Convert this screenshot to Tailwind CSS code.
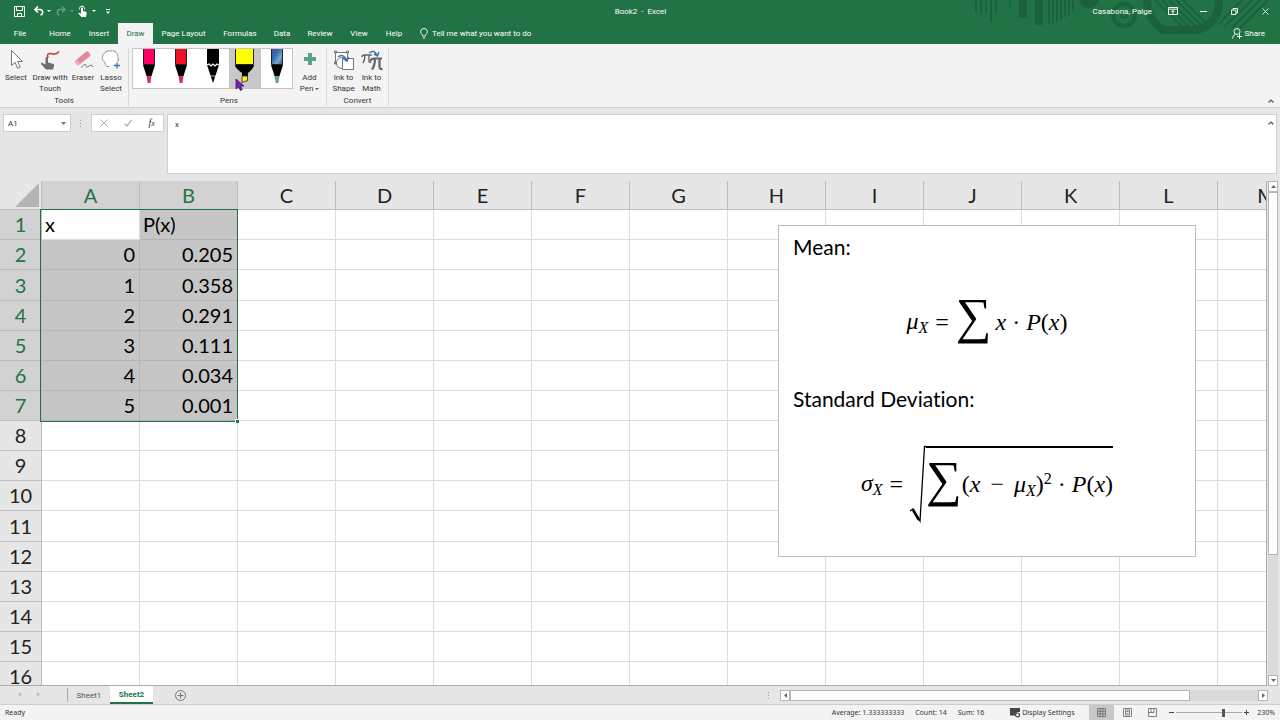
<!DOCTYPE html>
<html lang="en">
<head>
  <meta charset="UTF-8" />
  <meta name="viewport" content="width=device-width, initial-scale=1.0" />
  <title>Book2 - Excel</title>
  <script src="https://cdn.jsdelivr.net/npm/@tailwindcss/browser@4"></script>
</head>
<body class="flex h-screen flex-col overflow-hidden bg-[#e6e6e6] font-['Roboto','Noto_Sans',sans-serif] text-[8px] leading-[11px] text-[#333]">

  <!-- TITLE BAR + TABS -->
  <header class="relative bg-[#217346] text-white">
    <svg class="absolute top-0 right-0 h-11 w-[310px]" viewBox="0 0 310 44" fill="none" stroke="#1b613a">
      <path stroke-width="2" d="M6 0v13M11 0v15M16 0v13M21 0v22M26 0v12M40 0v7"/>
      <path stroke-width="8" d="M53 0v18M69 0v25"/>
      <path stroke-width="2" d="M79 0v24M83 0v23M87 0v22M91 0v20M95 0v17M99 0v15M103 0v11"/>
      <path fill="#1b613a" stroke="none" d="M109 0h20a10 8 0 0 1-20 0z"/>
      <circle cx="154" cy="15" r="11" stroke-width="4"/>
      <circle cx="154" cy="15" r="3" stroke-width="2"/>
      <path stroke-width="8" d="M177 0a36 36 0 0 0 16 30h35q22-8 21-30"/>
      <path stroke-width="2" d="M185 0l32 31M192 0l30 30M199 0l28 28M206 0l25 25M213 0l22 22M248 25l24-25M254 27l28-27M262 28l28-28M270 28l28-28"/>
    </svg>

    <div class="relative flex h-[22px] items-center">
      <div class="flex flex-1 items-center pl-3">
        <button class="flex w-5 pl-[2px]" aria-label="Save">
          <svg class="size-[11px]" viewBox="0 0 11 11" fill="none" stroke="#fff"><path d="M.5.5h10v10h-10zM2.500.5v4h6v-4M3.500 10.500v-3h4v3"/></svg>
        </button>
        <button class="flex w-6 items-center gap-[3px] pl-[2px]" aria-label="Undo">
          <svg class="h-[10px] w-[10px]" viewBox="0 0 10 10" fill="none" stroke="#fff" stroke-width="1.600"><path d="M4 .5L1 3.500l3 3M1 3.500h4.500a2.800 2.800 0 0 1 1 5.500"/></svg>
          <svg class="h-[2px] w-1" viewBox="0 0 4 2" fill="#fff"><path d="M0 0h4L2 2z"/></svg>
        </button>
        <button class="flex w-[22px] items-center gap-1 opacity-30" aria-label="Redo">
          <svg class="h-[10px] w-[10px]" viewBox="0 0 10 10" fill="none" stroke="#fff" stroke-width="1.400"><path d="M6 .5l3 3-3 3M9 3.500H4.500a2.800 2.800 0 0 0-1 5.500"/></svg>
          <svg class="h-[2px] w-1" viewBox="0 0 4 2" fill="#fff"><path d="M0 0h4L2 2z"/></svg>
        </button>
        <button class="flex items-center gap-[5px]" aria-label="Touch mode">
          <svg class="h-[12px] w-[9px]" viewBox="0 0 9 12" fill="#fff"><path d="M3 3.500a1 1 0 0 1 2 0V6l3 .8q.8.200.7 1.200L8 12H3.500L.3 8.500q0-1.200 1.500-.6L3 8.600z"/><path fill="none" stroke="#fff" d="M1.500 4.500a2.600 2.600 0 1 1 5 0"/></svg>
          <svg class="h-[2px] w-1" viewBox="0 0 4 2" fill="#fff"><path d="M0 0h4L2 2z"/></svg>
        </button>
        <button class="ml-[10px] flex" aria-label="Customize toolbar">
          <svg class="h-[5px] w-1" viewBox="0 0 4 5" fill="#fff"><path d="M0 0h4v1H0zM0 2.500h4L2 5z"/></svg>
        </button>
      </div>
      <h1 class="whitespace-pre">Book2  -  Excel</h1>
      <div class="flex flex-1 items-center justify-end pr-[11px]">
        <span>Casabona, Paige</span>
        <button class="ml-4 flex" aria-label="Ribbon display options">
          <svg class="h-[8px] w-[10px]" viewBox="0 0 10 8" fill="none" stroke="#fff"><path d="M.5.5h9v7h-9zM.5 2.200h9M5 7V3.500M3.500 5L5 3.500 6.500 5"/></svg>
        </button>
        <button class="ml-[22px] flex" aria-label="Minimize">
          <svg class="h-2 w-[7px]" viewBox="0 0 7 8" stroke="#fff"><path d="M0 4.500h7"/></svg>
        </button>
        <button class="ml-6 flex" aria-label="Restore">
          <svg class="size-[7px]" viewBox="0 0 7 7" fill="none" stroke="#fff" stroke-width=".9"><path d="M.5 2h4.500v4.500H.5zM2 2V.5h4.500V5H5"/></svg>
        </button>
        <button class="ml-6 flex" aria-label="Close">
          <svg class="size-[7px]" viewBox="0 0 8 8" stroke="#fff" stroke-width=".9"><path d="M.5.5l7 7M7.500.5l-7 7"/></svg>
        </button>
      </div>
    </div>

    <nav class="relative flex h-[22px] items-center">
      <a href="#" class="w-10 text-center">File</a>
      <a href="#" class="w-10 text-center">Home</a>
      <a href="#" class="w-[38px] text-center">Insert</a>
      <a href="#" class="mt-px flex h-[21px] w-[35px] items-center justify-center bg-[#f3f3f3] text-[#217346]">Draw</a>
      <a href="#" class="w-[61px] text-center">Page Layout</a>
      <a href="#" class="w-[52px] text-center">Formulas</a>
      <a href="#" class="w-8 text-center">Data</a>
      <a href="#" class="w-11 text-center">Review</a>
      <a href="#" class="w-[34px] text-center">View</a>
      <a href="#" class="w-9 text-center">Help</a>
      <button class="ml-2 flex items-center gap-1">
        <svg class="h-[11px] w-2" viewBox="0 0 8 11" fill="none" stroke="#fff" stroke-width=".9"><path d="M2.500 8V6.800Q.6 5.500.6 3.800a3.400 3.400 0 0 1 6.800 0Q7.400 5.500 5.500 6.800V8zM2.700 10h2.600"/></svg>
        Tell me what you want to do
      </button>
      <button class="mr-[15px] ml-auto flex items-center gap-[3px]">
        <svg class="h-[11px] w-[10px]" viewBox="0 0 10 11" fill="none" stroke="#fff" stroke-width=".9"><circle cx="5" cy="3.500" r="3"/><path d="M.5 10.500Q.8 7 3.500 6.300M7.500 6v5M5 8.500h5"/></svg>
        Share
      </button>
    </nav>
  </header>

  <!-- RIBBON -->
  <section class="flex h-16 items-stretch border-b border-[#d0d0d0] bg-[#f3f3f3] pt-1">
    <div class="mb-px flex w-[129px] flex-col border-r border-[#d8d8d8]">
      <div class="flex flex-1 pt-px text-center">
        <button class="flex w-8 flex-col items-center">
          <svg class="h-[23px] w-5" viewBox="0 0 20 23" fill="#fff" stroke="#666" stroke-width=".9"><path d="M5.500 1.500v15l3.600-3.200 2.500 6 2.600-1.200-2.600-5.600h5z"/></svg>
          <span>Select</span>
        </button>
        <button class="flex w-9 flex-col items-center">
          <svg class="h-[23px] w-6" viewBox="0 0 24 23"><path fill="none" stroke="#c8403c" stroke-width="1.600" d="M10 9Q8 4 13 4.500q5 2 8-2"/><path fill="#6d6d6d" d="M7.500 9.500q0-1.500 1.300-1.500T10 9.500v4l5 1.300q1.500.5 1 2.200l-1 3.500H8l-5-5.500q.5-2 2.500-.5l2 1z"/></svg>
          <span>Draw with<br>Touch</span>
        </button>
        <button class="flex w-[30px] flex-col items-center">
          <svg class="h-[23px] w-6" viewBox="0 0 24 23"><path fill="#e8859a" d="M5.500 10.500L15.500 2.500q1-.6 2 .4l1.800 2.600q.5 1-.4 1.700L9 15z"/><path fill="#f3a8b6" d="M5.500 10.500L9 15l-1.500 1.200q-1 .5-1.800-.4L4 13.500q-.7-1 .2-1.800z"/><path fill="none" stroke="#777" d="M10 18.500q5-5 5-2t3 .5 4 1"/></svg>
          <span>Eraser</span>
        </button>
        <button class="flex w-[26px] flex-col items-center">
          <svg class="h-[23px] w-6" viewBox="0 0 24 23"><path fill="#fff" stroke="#666" stroke-dasharray="2 .6" stroke-width=".9" d="M10 17.500q-4 .5-4-4Q2 10 4 6.500 6 1.500 11 2q6-1 7.500 4t0 7"/><path stroke="#3f78bd" stroke-width="1.400" d="M18 13.500v6M15 16.500h6"/></svg>
          <span>Lasso<br>Select</span>
        </button>
      </div>
      <p class="text-center">Tools</p>
    </div>

    <div class="mb-px flex w-[198px] flex-col border-r border-[#d8d8d8] pl-[3px]">
      <div class="flex flex-1 items-start">
        <div class="flex h-[41px] border border-[#c6c6c6] bg-white">
          <button class="w-8" aria-label="Pink pen">
            <svg class="h-[39px] w-8" viewBox="0 0 32 39"><path stroke="#222" fill="#ff0066" d="M10.500-1h11v16.500h-11z"/><path d="M10 16h12l-3.500 11h-5z"/><path fill="#c53a68" d="M13.500 27h5L17.500 34h-2.800z"/></svg>
          </button>
          <button class="w-8" aria-label="Red pen">
            <svg class="h-[39px] w-8" viewBox="0 0 32 39"><path stroke="#222" fill="#f01028" d="M10.500-1h11v16.500h-11z"/><path d="M10 16h12l-3.500 11h-5z"/><path fill="#c53a58" d="M13.500 27h5L17.500 34h-2.800z"/></svg>
          </button>
          <button class="w-8" aria-label="Black pencil">
            <svg class="h-[39px] w-8" viewBox="0 0 32 39"><path d="M10 0h12v16l-6 18-6-18z"/><path fill="none" stroke="#fff" stroke-width="1.200" d="M10 16l2-1 2 2 2-2 2 2 2-2 2 1"/><path stroke="#fff" stroke-width=".7" d="M13 27h6"/></svg>
          </button>
          <button class="w-8 bg-[#c8c8c8]" aria-label="Yellow highlighter">
            <svg class="h-[39px] w-8" viewBox="0 0 32 39"><path stroke="#222" fill="#ff0" d="M6.500-1h18v16.500h-18z"/><path d="M6 16h19q0 3-6 8v3h-6v-3Q6 19 6 16z"/><path stroke="#222" stroke-width=".8" fill="#ffee20" d="M13 27h5.500v4.500L13 33.500z"/></svg>
          </button>
          <button class="w-[31px]" aria-label="Galaxy pen">
            <svg class="h-[39px] w-8" viewBox="0 0 32 39"><defs><linearGradient id="galaxy" x2="1" y2="1"><stop stop-color="#5b4b8c"/><stop offset=".4" stop-color="#356fae"/><stop offset=".7" stop-color="#77a9c9"/><stop offset="1" stop-color="#294b86"/></linearGradient></defs><path stroke="#222" fill="url(#galaxy)" d="M10.500-1h11v16.500h-11z"/><path d="M10 16h12l-3.500 11h-5z"/><path fill="#6b9c9c" d="M13.500 27h5L17.500 34h-2.800z"/></svg>
          </button>
        </div>
        <button class="flex flex-1 flex-col items-center pt-px">
          <svg class="h-[23px] w-3" viewBox="0 0 12 23" fill="#5aa284"><path d="M4 4h4v4h4v4H8v4H4v-4H0V8h4z"/></svg>
          <span>Add<br>Pen <svg class="inline h-[2px] w-1" viewBox="0 0 4 2" fill="#555"><path d="M0 0h4L2 2z"/></svg></span>
        </button>
      </div>
      <p class="text-center">Pens</p>
    </div>

    <div class="mb-px flex w-[62px] flex-col border-r border-[#d8d8d8]">
      <div class="flex flex-1 justify-center pt-px">
        <button class="flex w-7 flex-col items-center">
          <svg class="h-[23px] w-6" viewBox="0 0 24 23" fill="#fff" stroke="#777"><path d="M3.500 3.500h12v11h-12z"/><circle cx="10" cy="14" r="5.500"/><path d="M10.500 9.500h11v11h-11z"/><path fill="none" stroke="#777" d="M2.500 2h2v2h-2zM14.500 2h2v2h-2zM2.500 13h2v2h-2z"/><path fill="none" stroke="#3f78bd" stroke-width="1.600" d="M6 8q5-4 8.500 3M11 9.500l4 2.500 1.500-4"/></svg>
          <span>Ink to<br>Shape</span>
        </button>
        <button class="flex w-7 flex-col items-center">
          <svg class="h-[23px] w-6" viewBox="0 0 24 23" fill="none" stroke="#666"><path stroke-width="1.400" d="M1.500 8q1-2 3-2H12M5 6q0 5-2 8M9 6v6q0 1.500 2 1.500"/><path stroke-width="2.200" d="M10.500 12q1-2.500 3.500-2.500h8M15 9.500q0 7-3 11M19.500 9.500v8q0 3 3 2.500"/><path stroke="#3f78bd" stroke-width="1.500" d="M9 4q5-4 8 2M14 5l3.500 2L19 3"/></svg>
          <span>Ink to<br>Math</span>
        </button>
      </div>
      <p class="text-center">Convert</p>
    </div>
    <button class="mr-[6px] mb-1 ml-auto self-end" aria-label="Collapse ribbon">
      <svg class="h-1 w-[6px]" viewBox="0 0 6 4" fill="none" stroke="#555" stroke-width="1.200"><path d="M.5 3.500L3 1l2.500 2.500"/></svg>
    </button>
  </section>

  <!-- FORMULA BAR -->
  <section class="flex h-[73px] items-start pt-[6px] pr-[3px] pl-[3px]">
    <div class="flex h-[18px] w-[68px] items-center border border-[#cfcfcf] bg-white pr-1">
      <input type="text" value="A1" aria-label="Name box" class="w-full min-w-0 flex-1 pl-1 outline-none">
      <svg class="h-[3px] w-[5px]" viewBox="0 0 5 3" fill="#777"><path d="M0 0h5L2.500 3z"/></svg>
    </div>
    <svg class="mt-[6px] ml-[9px] h-[7px] w-[2px]" viewBox="0 0 2 7" fill="#999"><path d="M0 0h1v1H0zM0 3h1v1H0zM0 6h1v1H0z"/></svg>
    <div class="ml-[9px] flex h-[18px] w-[73px] items-center justify-around border border-[#cfcfcf] bg-white">
      <button aria-label="Cancel"><svg class="size-2" viewBox="0 0 8 8" stroke="#b0b0b0"><path d="M.5.5l7 7M7.500.5l-7 7"/></svg></button>
      <button aria-label="Enter"><svg class="size-2" viewBox="0 0 8 8" fill="none" stroke="#b0b0b0" stroke-width="1.300"><path d="M.5 4.500L3 7l4.500-6"/></svg></button>
      <button class="font-['Liberation_Serif',serif] text-[10px] text-[#333] italic" aria-label="Insert function">f<span class="text-[8px]">x</span></button>
    </div>
    <div class="ml-[3px] flex h-[60px] flex-1 border border-[#cfcfcf] bg-white">
      <textarea aria-label="Formula bar" class="flex-1 resize-none px-[7px] pt-1 outline-none">x</textarea>
      <svg class="mt-[6px] mr-[2px] h-1 w-[6px]" viewBox="0 0 6 4" fill="none" stroke="#555" stroke-width="1.200"><path d="M.5 3.500L3 1l2.500 2.500"/></svg>
    </div>
  </section>

  <!-- SHEET -->
  <main class="flex min-h-0 flex-1">
    <div class="relative min-w-0 flex-1 overflow-hidden border-r border-b border-[#ababab] bg-white font-['Lato',sans-serif] text-xl text-black [font-variant-ligatures:none]">
      <table class="w-[1316px] table-fixed border-separate border-spacing-0 leading-[26px]">
        <thead>
          <tr id="columnRow" class="h-[29px]">
            <th class="w-[42px] border-r border-b border-[#bdbdbd] bg-[#e6e6e6] p-0">
              <svg class="ml-[15px] h-6 w-6" viewBox="0 0 24 24" fill="#b4b4b4"><path d="M24 0v24H0z"/></svg>
            </th>
          </tr>
        </thead>
        <tbody id="gridBody"></tbody>
      </table>

      <!-- selection frame -->
      <div class="pointer-events-none absolute top-[28px] left-[40px] h-[213px] w-[198px] border border-[#217346]">
        <span class="absolute -right-[2px] -bottom-[2px] size-1 border-t border-l border-white bg-[#217346]"></span>
      </div>

      <!-- formula text box -->
      <div class="absolute top-[44px] left-[778px] h-[332px] w-[418px] border border-[#bdbdbd] bg-white px-[14px] pt-[7px] text-[21px]">
        <p class="leading-7">Mean:</p>
        <div class="mt-[37px] flex h-12 items-center justify-center font-['Liberation_Serif',serif] text-2xl leading-6">
          <span class="italic">μ<sub class="text-base">X</sub></span>
          <span class="mx-[7px]">=</span>
          <span class="pb-3 text-[50px] leading-[48px]">∑</span>
          <span class="ml-1"><i>x</i> · <i>P</i>(<i>x</i>)</span>
        </div>
        <p class="mt-[39px] leading-7">Standard Deviation:</p>
        <div class="mt-[31px] flex h-20 items-center justify-center font-['Liberation_Serif',serif] text-2xl leading-6">
          <span class="italic">σ<sub class="text-base">X</sub></span>
          <span class="mx-[7px]">=</span>
          <svg class="h-[78px] w-4" viewBox="0 0 16 78" fill="none" stroke="#000"><path stroke-width="1.300" d="M0 66l3-2 7 12L14.500 1.500H16"/><path stroke-width="2.600" d="M3 65l6 10"/></svg>
          <div class="flex h-[76px] items-center border-t-2 border-black">
            <span class="pb-3 text-[50px] leading-[48px]">∑</span>
            <span>(<i>x</i> <span class="mx-1">−</span> <i>μ<sub class="text-base">X</sub></i>)<sup class="text-base">2</sup> · <i>P</i>(<i>x</i>)</span>
          </div>
        </div>
      </div>
    </div>

    <!-- vertical scrollbar -->
    <div class="mr-[2px] ml-px flex w-[10px] flex-col bg-[#dadada]">
      <button class="flex h-[11px] items-center justify-center border border-[#b5b5b5] bg-white" aria-label="Scroll up"><svg class="h-[3px] w-[5px]" viewBox="0 0 5 3" fill="#666"><path d="M0 3h5L2.500 0z"/></svg></button>
      <div class="h-[363px] border border-[#b5b5b5] bg-white"></div>
      <button class="mt-auto flex h-[11px] items-center justify-center border border-[#b5b5b5] bg-white" aria-label="Scroll down"><svg class="h-[3px] w-[5px]" viewBox="0 0 5 3" fill="#666"><path d="M0 0h5L2.500 3z"/></svg></button>
    </div>
  </main>

  <!-- SHEET TABS -->
  <section class="flex h-[19px] items-start border-b border-[#cdcdcd]">
    <div class="mt-[6px] flex w-[67px] gap-4 pl-[18px]">
      <svg class="h-[5px] w-[3px]" viewBox="0 0 3 5" fill="#bbb"><path d="M3 0v5L0 2.500z"/></svg>
      <svg class="h-[5px] w-[3px]" viewBox="0 0 3 5" fill="#bbb"><path d="M0 0v5l3-2.500z"/></svg>
    </div>
    <button class="mt-[2px] h-[14px] w-[43px] border-l border-[#ababab] text-[#555]">Sheet1</button>
    <button class="h-[18px] w-[43px] border-b-2 border-[#217346] bg-white pt-px font-bold text-[#217346]">Sheet2</button>
    <button class="mt-1 ml-[22px]" aria-label="New sheet">
      <svg class="size-[11px]" viewBox="0 0 11 11" fill="none" stroke="#777"><circle cx="5.500" cy="5.500" r="5"/><path d="M5.500 2.500v6M2.500 5.500h6"/></svg>
    </button>
    <svg class="mt-[6px] ml-auto h-[7px] w-[2px]" viewBox="0 0 2 7" fill="#999"><path d="M0 0h1v1H0zM0 3h1v1H0zM0 6h1v1H0z"/></svg>
    <div class="mt-1 mr-3 ml-[10px] flex h-[11px] w-[488px] bg-[#dadada]">
      <button class="flex w-[10px] items-center justify-center border border-[#b5b5b5] bg-white" aria-label="Scroll left"><svg class="h-[5px] w-[3px]" viewBox="0 0 3 5" fill="#666"><path d="M3 0v5L0 2.500z"/></svg></button>
      <div class="w-[400px] border border-[#b5b5b5] bg-white"></div>
      <button class="ml-auto flex w-[10px] items-center justify-center border border-[#b5b5b5] bg-white" aria-label="Scroll right"><svg class="h-[5px] w-[3px]" viewBox="0 0 3 5" fill="#666"><path d="M0 0v5l3-2.500z"/></svg></button>
    </div>
  </section>

  <!-- STATUS BAR -->
  <footer class="flex h-[15px] items-center bg-[#f3f3f3] pr-[5px] pl-[5px] font-['Noto_Sans',sans-serif] text-[7px]">
    <span>Ready</span>
    <span class="ml-auto">Average: 1.333333333</span>
    <span class="ml-[11px]">Count: 14</span>
    <span class="ml-[11px]">Sum: 16</span>
    <button class="ml-[26px] flex w-[79px] items-center gap-[2px]">
      <svg class="h-[10px] w-[10px]" viewBox="0 0 10 10" fill="#444"><path d="M0 0h10v4H7.500L5 6v1.500H0z"/><path d="M1 9h4"/><circle cx="7.500" cy="7" r="2" fill="#f3f3f3" stroke="#444" stroke-width="1.200"/></svg>
      Display Settings
    </button>
    <button class="flex h-[15px] w-[25px] items-center justify-center bg-[#c8c8c8]" aria-label="Normal view"><svg class="size-[9px]" viewBox="0 0 9 9" fill="none" stroke="#666" stroke-width=".8"><path d="M.5.5h8v8h-8zM3.200.5v8M5.800.5v8M.5 3.200h8M.5 5.800h8"/></svg></button>
    <button class="flex w-[26px] justify-center" aria-label="Page layout view"><svg class="size-[9px]" viewBox="0 0 9 9" fill="none" stroke="#666" stroke-width=".8"><path d="M.5.5h8v8h-8zM2.500 2h4v5h-4zM3.500 3.500h2M3.500 5.300h2"/></svg></button>
    <button class="flex w-[25px] justify-center" aria-label="Page break view"><svg class="size-[9px]" viewBox="0 0 9 9" fill="none" stroke="#666" stroke-width=".8"><path d="M.5.5h8v8h-8zM3 .5v4M6 .5v4M.5 4.500H6"/></svg></button>
    <button class="ml-1 flex" aria-label="Zoom out"><svg class="h-[5px] w-[5px]" viewBox="0 0 5 5" stroke="#444"><path d="M0 2.500h5"/></svg></button>
    <input type="range" min="10" max="400" value="295" aria-label="Zoom" class="ml-[2px] h-[9px] w-[66px] appearance-none bg-linear-to-b from-transparent from-45% via-[#aaa] via-50% to-transparent to-55% [&::-webkit-slider-thumb]:h-2 [&::-webkit-slider-thumb]:w-[3px] [&::-webkit-slider-thumb]:appearance-none [&::-webkit-slider-thumb]:bg-[#555]">
    <button class="ml-[2px] flex" aria-label="Zoom in"><svg class="h-[5px] w-[5px]" viewBox="0 0 5 5" stroke="#444"><path d="M0 2.500h5M2.500 0v5"/></svg></button>
    <span class="ml-2">230%</span>
  </footer>

  <!-- mouse pointer -->
  <svg class="pointer-events-none absolute top-[78px] left-[235px] h-[14px] w-[10px]" viewBox="0 0 10 14"><path fill="#7a1fb5" stroke="#3c1060" stroke-width=".8" d="M1 1v10l2.500-2 2 3.500 1.800-1L5.500 8H9z"/></svg>

  <script>
    const columns = ["A", "B", "C", "D", "E", "F", "G", "H", "I", "J", "K", "L", "M"];
    const data = [
      ["x", "P(x)"],
      ["0", "0.205"],
      ["1", "0.358"],
      ["2", "0.291"],
      ["3", "0.111"],
      ["4", "0.034"],
      ["5", "0.001"]
    ];

    const columnRow = document.getElementById("columnRow");
    const gridBody = document.getElementById("gridBody");

    columns.forEach((name, c) => {
      const th = document.createElement("th");
      th.className = `border-r border-b border-[#bdbdbd] p-0 font-normal ${
        c < 2 ? "bg-[#d2d2d2] text-[#217346]" : "bg-[#e6e6e6] text-[#222]"
      }`;
      th.textContent = name;
      columnRow.appendChild(th);
    });

    for (let r = 0; r < 16; r++) {
      const tr = document.createElement("tr");
      // 230% zoom rounds a row up every now and then
      tr.className = r === 2 || r === 10 ? "h-[31px]" : "h-[30px]";

      const th = document.createElement("th");
      th.className = `border-r border-b border-[#bdbdbd] p-0 pb-px font-normal ${
        r < data.length ? "bg-[#d2d2d2] text-[#217346]" : "bg-[#e6e6e6] text-[#222]"
      }`;
      th.textContent = r + 1;
      tr.appendChild(th);

      columns.forEach((name, c) => {
        const td = document.createElement("td");
        const selected = r < data.length && c < 2;
        td.className = `border-r border-b p-0 pr-1 pb-px pl-[3px] ${r === 0 ? "text-left" : "text-right"} ${
          selected && !(r === 0 && c === 0) ? "border-[#b5b5b5] bg-[#c6c6c6]" : "border-[#dcdcdc] bg-white"
        }`;
        td.textContent = selected ? data[r][c] : "";
        tr.appendChild(td);
      });
      gridBody.appendChild(tr);
    }
  </script>
</body>
</html>
